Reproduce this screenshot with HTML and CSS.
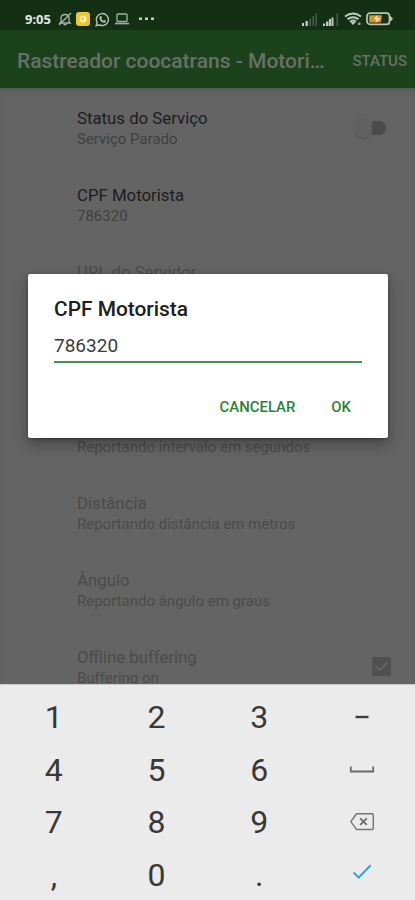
FILE: index.html
```html
<!DOCTYPE html>
<html lang="pt-BR">
<head>
<meta charset="utf-8">
<title>Rastreador coocatrans - Motorista</title>
<link rel="stylesheet" href="styles.css">
</head>
<body>
<div class="phone">
  <header class="status-bar">
    <span class="clock">9:05</span>
    <svg class="muted" width="14" height="14" viewBox="0 0 14 14"><path d="M3 10V6.2Q3 2.5 7 2.5T11 6.2V10L12 11H2ZM5.5 12.6H8.5M1 13L13 1" fill="none" stroke="#a9b7aa" stroke-width="1.3"/></svg>
    <span class="app-badge"><svg width="14" height="14" viewBox="0 0 14 14"><circle cx="7" cy="7" r="3.4" fill="#fff2b8"/><path d="M4.5 7H8M7 5V8.6" stroke="#edbf20" stroke-width="1"/></svg></span>
    <svg class="chat" width="15" height="15" viewBox="0 0 15 15"><path d="M1.2 13.7L2.1 10.4A6 6 0 1 1 4.5 12.8Z" fill="none" stroke="#b4c1b5" stroke-width="1.4"/><path d="M5 4.2L6.3 4L7 5.9L6.3 6.7Q7 8.1 8.5 8.8L9.3 8L11 8.9Q11 10.8 9 10.7Q5 10 4.4 6Z" fill="#b4c1b5"/></svg>
    <svg class="laptop" width="14" height="12" viewBox="0 0 14 12"><rect x="2" y="1" width="10" height="7.5" rx="1" fill="none" stroke="#9db09f" stroke-width="1.4"/><path d="M0 10.5H14" stroke="#9db09f" stroke-width="1.7"/></svg>
    <svg class="more" width="15" height="4" viewBox="0 0 15 4"><path d="M0 .5H3V3H0ZM6 .5H9V3H6ZM12 .5H15V3H12Z" fill="#c2cdc3"/></svg>
    <span class="grow"></span>
    <svg class="signal" width="17" height="13" viewBox="0 0 17 13"><path d="M1 10H3V13H1ZM4.5 8H6.8V13H4.5Z" fill="#c6d1c7"/><path d="M8.3 5.5H10V13H8.3ZM11.5 3H13V13H11.5ZM14.5 .5H16V13H14.5Z" fill="#45604a"/></svg>
    <svg class="signal second" width="17" height="13" viewBox="0 0 17 13"><path d="M1 10.5H3V13H1ZM4 8.5H6.5V13H4ZM7 6H9V13H7ZM9.5 4.5H11.5V13H9.5Z" fill="#bdcabf"/><path d="M14.5 .5H16V13H14.5Z" fill="#45604a"/></svg>
    <svg class="wifi" width="18" height="14" viewBox="0 0 18 14"><path d="M1 4.6Q9 -1.6 17 4.6M3.5 7.3Q9 3 14.5 7.3M6 9.8Q9 7.4 12 9.8" fill="none" stroke="#c0ccc1" stroke-width="1.9"/><path d="M6.7 10.6Q9 9 11.3 10.6L9 13Z" fill="#c0ccc1"/><path d="M14 10.5H16.5V13H14Z" fill="#8fa391"/></svg>
    <svg class="battery" width="27" height="14" viewBox="0 0 27 14"><rect x="1" y="1.2" width="22.5" height="11.2" rx="3" fill="none" stroke="#b9c7ae" stroke-width="1.7"/><path d="M24.5 4.5L26.5 6.8L24.5 9Z" fill="#b9c7ae" stroke="#b9c7ae"/><path d="M3.2 3.3H16L14.8 10.5H3.2Z" fill="#d4942a"/><path d="M11.5 3L7.5 7.3H10.5L9.5 10.8L15 6.3H11.5Z" fill="#f6e4b4"/></svg>
  </header>
  <div class="app-bar">
    <h1 class="app-title">Rastreador coocatrans - Motori…</h1>
    <span class="app-action">STATUS</span>
  </div>
  <main class="settings">
    <section class="row">
      <div class="labels"><div class="name">Status do Serviço</div><div class="summary">Serviço Parado</div></div>
      <span class="switch"><span class="track"></span><span class="thumb"></span></span>
    </section>
    <section class="row"><div class="labels"><div class="name">CPF Motorista</div><div class="summary">786320</div></div></section>
    <section class="row disabled"><div class="labels"><div class="name">URL do Servidor</div></div></section>
    <section class="row"></section>
    <section class="row disabled"><div class="labels"><div class="name">&nbsp;</div><div class="summary">Reportando intervalo em segundos</div></div></section>
    <section class="row disabled"><div class="labels"><div class="name">Distância</div><div class="summary">Reportando distância em metros</div></div></section>
    <section class="row disabled"><div class="labels"><div class="name">Ângulo</div><div class="summary">Reportando ângulo em graus</div></div></section>
    <section class="row disabled">
      <div class="labels"><div class="name">Offline buffering</div><div class="summary">Buffering on</div></div>
      <svg class="checkbox" width="19" height="19" viewBox="0 0 19 19"><rect width="19" height="19" rx="2" fill="#505050"/><path d="M3.8 9.5L7.6 13.2L15.2 5.6" fill="none" stroke="#666" stroke-width="2"/></svg>
    </section>
  </main>
  <div class="keyboard">
    <span class="key">1</span><span class="key">2</span><span class="key">3</span>
    <span class="key"><svg width="26" height="20" viewBox="0 0 26 20"><path d="M6.5 10H19.5" stroke="#3c3c3c" stroke-width="2.4"/></svg></span>
    <span class="key">4</span><span class="key">5</span><span class="key">6</span>
    <span class="key"><svg width="26" height="20" viewBox="0 0 26 20"><path d="M1.8 6.5V11.5H24.2V6.5" fill="none" stroke="#6b6b6b" stroke-width="1.8"/></svg></span>
    <span class="key">7</span><span class="key">8</span><span class="key">9</span>
    <span class="key"><svg width="26" height="20" viewBox="0 0 26 20"><path d="M7.5 1.8H23Q24.3 1.8 24.3 3V16.2Q24.3 17.4 23 17.4H7.5L1.8 9.6Z" fill="none" stroke="#777" stroke-width="1.5" stroke-linejoin="round"/><path d="M11.2 6.4L17.8 12.8M17.8 6.4L11.2 12.8" stroke="#686868" stroke-width="1.7"/></svg></span>
    <span class="key">,</span><span class="key">0</span><span class="key">.</span>
    <span class="key"><svg width="26" height="28" viewBox="0 0 26 28"><path d="M4.5 11.5L9.7 16.5L21.7 4.2" fill="none" stroke="#429fdb" stroke-width="2"/></svg></span>
  </div>
  <div class="dialog" role="dialog">
    <h2 class="dialog-title">CPF Motorista</h2>
    <div class="field">786320</div>
    <div class="actions"><span class="cancel">CANCELAR</span><span class="ok">OK</span></div>
  </div>
</div>
</body>
</html>
```
FILE: styles.css
```css
* { box-sizing: border-box; }
body { margin: 0; font-family: Roboto, "Liberation Sans", sans-serif; }
svg { display: block; flex: none; }
.phone { position: relative; width: 415px; height: 900px; overflow: hidden; display: flex; flex-direction: column; background: #646464; }
.status-bar { height: 30px; flex: none; background: #133015; display: flex; align-items: center; padding: 8px 22px 0 25px; }
.clock { width: 33px; font: 700 13px/14px "Noto Sans", sans-serif; color: #e3e9e3; }
.app-badge { width: 14px; height: 14px; margin-left: 4px; border-radius: 3px; background: #efc62e; }
.chat { margin-left: 5px; }
.laptop { margin-left: 5px; }
.more { margin-left: 10px; }
.grow { flex: 1; }
.second { margin-left: 4px; }
.wifi { margin-left: 5px; }
.battery { margin-left: 4px; }
.app-bar { height: 59px; flex: none; display: flex; align-items: center; justify-content: space-between; padding: 3px 8px 0 17px; background: #1c421c; border-bottom: 1px solid #526052; color: #687168; white-space: nowrap; }
.app-title { margin: 0; font-size: 21px; font-weight: 500; }
.app-action { font-size: 15px; font-weight: 500; }
.settings { height: 595px; flex: none; overflow: hidden; box-shadow: inset 0 4px 5px -3px #555; }
.row { height: 77px; display: flex; justify-content: space-between; padding: 18px 24px 0 77px; white-space: nowrap; }
.name { font-size: 16.8px; line-height: 22px; color: #1d1d1d; }
.summary { font-size: 15px; line-height: 21px; color: #404040; }
.disabled .name, .disabled .summary { color: #4b4b4b; }
.switch { display: flex; width: 34px; height: 22px; margin: 10px 3px 0 0; align-items: center; flex-direction: row-reverse; }
.track { width: 15px; height: 14px; margin-right: 2px; border-radius: 0 7px 7px 0; background: #4b4b4b; }
.thumb { width: 19px; height: 20px; border-radius: 10px; background: #606060; box-shadow: 0 1px 1px #555; }
.checkbox { margin-top: 11px; }
.keyboard { height: 216px; flex: none; display: grid; grid-template-columns: repeat(4, 102.7px); grid-template-rows: repeat(4, 52.6px); padding: 6px 0 0 2.5px; background: #ebebeb; border-top: 1px solid #c9c9c9; }
.key { display: flex; align-items: center; justify-content: center; font-size: 32px; line-height: 52px; color: #383838; }
.dialog { position: absolute; left: 28px; top: 274px; width: 360px; height: 164px; padding: 22px 26px 0; background: #fff; border-radius: 2px; box-shadow: 0 6px 14px rgba(0,0,0,.32), 0 1px 3px rgba(0,0,0,.3); }
.dialog-title { margin: 0; font-size: 20.9px; line-height: 26px; font-weight: 500; color: #202020; }
.field { height: 41px; padding-top: 12px; font-size: 19px; line-height: 24px; color: #3b3b3b; border-bottom: 2px solid #43934e; }
.actions { display: flex; justify-content: flex-end; gap: 36px; padding: 35px 11px 0 0; font-size: 14.9px; line-height: 18px; font-weight: 500; color: #2c8138; }
```
